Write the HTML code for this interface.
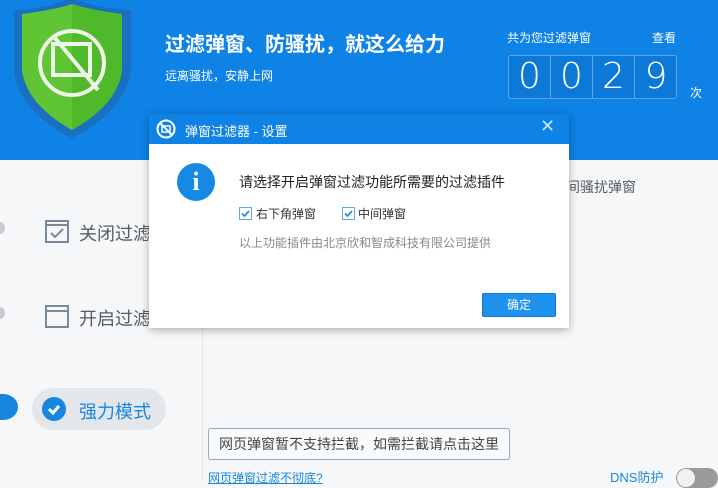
<!DOCTYPE html>
<html><head><meta charset="utf-8"><style>
*{margin:0;padding:0;box-sizing:border-box}
body{width:718px;height:480px;overflow:hidden;position:relative;background:#f5f7f8;font-family:"Liberation Sans","Noto Sans CJK SC",sans-serif}
.hdr{position:absolute;left:0;top:0;width:718px;height:160px;background:#0f82e6}
.a{position:absolute;white-space:nowrap}
.dig{position:absolute;top:56px;width:42px;height:42px;border-right:1px solid #5aa7ee;color:#fff;font-size:36px;font-weight:normal;text-align:center;line-height:42px;font-family:"DejaVu Sans","Liberation Sans",sans-serif;font-weight:200}
</style></head><body>
<div class="hdr"></div>
<svg class="a" style="left:10px;top:0" width="125" height="140" viewBox="0 0 125 140">
<path d="M4 10 Q40 8 62 -2 Q84 8 121 10 L121 70 Q116 110 62 138 Q8 110 4 70 Z" fill="#1a6fc0"/>
<path d="M12 14 Q44 10 62 4 Q80 10 112 14 L112 70 Q108 104 62 130 Q16 104 12 70 Z" fill="#5fc535"/>
<path d="M62 4 Q80 10 112 14 L112 70 Q108 104 62 130 Z" fill="#50b82b"/>
<circle cx="62" cy="63" r="32" fill="none" stroke="#eef6e6" stroke-width="4"/>
<rect x="43" y="44" width="37" height="31" fill="none" stroke="#eef6e6" stroke-width="4"/>
<line x1="45" y1="38" x2="88" y2="90" stroke="#eef6e6" stroke-width="4"/>
</svg>
<div class="a" style="left:165px;top:28px;color:#fff;font-size:20px;font-weight:bold">过滤弹窗、防骚扰，就这么给力</div>
<div class="a" style="left:165px;top:67px;color:#fff;font-size:12px">远离骚扰，安静上网</div>
<div class="a" style="left:507px;top:29px;color:#fff;font-size:12px">共为您过滤弹窗</div>
<div class="a" style="left:652px;top:29px;color:#fff;font-size:12px">查看</div>
<div class="a" style="left:508px;top:55px;width:169px;height:44px;border:1px solid #5aa7ee;border-radius:3px;background:#0c78d8"></div>
<div class="dig" style="left:509px">0</div><div class="dig" style="left:551px">0</div><div class="dig" style="left:593px">2</div><div class="dig" style="left:635px;border:none">9</div>
<div class="a" style="left:690px;top:84px;color:#fff;font-size:12px">次</div>
<div class="a" style="left:202px;top:160px;width:1px;height:320px;background:#e3e6e8"></div>
<div class="a" style="left:-5px;top:222px;width:10px;height:12px;border-radius:50%;background:#c8ccd0"></div>
<div class="a" style="left:-5px;top:307px;width:10px;height:12px;border-radius:50%;background:#c8ccd0"></div>
<svg class="a" style="left:45px;top:220px" width="24" height="24"><rect x="1" y="1" width="22" height="21" fill="none" stroke="#7b8a99" stroke-width="2"/><line x1="1" y1="5" x2="23" y2="5" stroke="#7b8a99" stroke-width="2"/><path d="M6 13 L10 17 L18 9" fill="none" stroke="#7b8a99" stroke-width="2"/></svg>
<div class="a" style="left:79px;top:220px;color:#555c63;font-size:18px">关闭过滤</div>
<svg class="a" style="left:45px;top:305px" width="24" height="24"><rect x="1" y="1" width="22" height="21" fill="none" stroke="#7b8a99" stroke-width="2"/><line x1="1" y1="6" x2="23" y2="6" stroke="#7b8a99" stroke-width="2"/></svg>
<div class="a" style="left:79px;top:305px;color:#555c63;font-size:18px">开启过滤</div>
<div class="a" style="left:-12px;top:394px;width:30px;height:26px;border-radius:0 50% 50% 0/0 50% 50% 0;background:#1786e0"></div>
<div class="a" style="left:32px;top:388px;width:134px;height:42px;border-radius:21px;background:#e3e7eb"></div>
<div class="a" style="left:42px;top:397px;width:24px;height:24px;border-radius:50%;background:#1786e0"></div>
<svg class="a" style="left:42px;top:397px" width="24" height="24"><path d="M7 12 L11 16 L17 9" fill="none" stroke="#fff" stroke-width="3"/></svg>
<div class="a" style="left:79px;top:398px;color:#1786e0;font-size:18px">强力模式</div>
<div class="a" style="left:566px;top:177px;color:#555c63;font-size:14px">间骚扰弹窗</div>
<div class="a" style="left:208px;top:428px;width:302px;height:32px;border:1px solid #9aa7b4;border-radius:3px;background:#f8fafb;color:#444;font-size:14px;line-height:30px;padding-left:10px">网页弹窗暂不支持拦截，如需拦截请点击这里</div>
<div class="a" style="left:208px;top:469px;color:#1786e0;font-size:12px;text-decoration:underline">网页弹窗过滤不彻底?</div>
<div class="a" style="left:610px;top:467px;color:#1786e0;font-size:13px">DNS防护</div>
<div class="a" style="left:676px;top:468px;width:42px;height:20px;border-radius:10px;background:#9a9a9a"></div>
<div class="a" style="left:677px;top:469px;width:18px;height:18px;border-radius:50%;background:#f1f1f1"></div>
<div class="a" style="left:149px;top:114px;width:420px;height:214px;background:#fff;box-shadow:0 2px 8px rgba(0,0,0,.3)"></div>
<div class="a" style="left:149px;top:114px;width:420px;height:30px;background:#0f82e6"></div>
<svg class="a" style="left:156px;top:119px" width="20" height="20"><circle cx="10" cy="10" r="8.5" fill="none" stroke="#fff" stroke-width="2"/><rect x="6" y="7" width="8" height="6" fill="none" stroke="#fff" stroke-width="1.5"/><line x1="4" y1="4" x2="16" y2="16" stroke="#fff" stroke-width="2"/></svg>
<div class="a" style="left:185px;top:121px;color:#fff;font-size:13px">弹窗过滤器 - 设置</div>
<div class="a" style="left:540px;top:116px;color:#cfe4f8;font-size:18px">✕</div>
<div class="a" style="left:177px;top:163px;width:38px;height:38px;border-radius:50%;background:#1789e4;color:#fff;font:bold 26px 'Liberation Serif',serif;text-align:center;line-height:38px">i</div>
<div class="a" style="left:239px;top:172px;color:#222;font-size:14px">请选择开启弹窗过滤功能所需要的过滤插件</div>
<svg class="a" style="left:239px;top:207px" width="13" height="13"><rect x="0.5" y="0.5" width="12" height="12" fill="#fff" stroke="#69a8e0"/><path d="M3 6.5 L5.5 9 L10 4" fill="none" stroke="#2a8ce0" stroke-width="1.8"/></svg>
<div class="a" style="left:256px;top:205px;color:#333;font-size:12px">右下角弹窗</div>
<svg class="a" style="left:342px;top:207px" width="13" height="13"><rect x="0.5" y="0.5" width="12" height="12" fill="#fff" stroke="#69a8e0"/><path d="M3 6.5 L5.5 9 L10 4" fill="none" stroke="#2a8ce0" stroke-width="1.8"/></svg>
<div class="a" style="left:358px;top:205px;color:#333;font-size:12px">中间弹窗</div>
<div class="a" style="left:239px;top:234px;color:#888;font-size:12px">以上功能插件由北京欣和智成科技有限公司提供</div>
<div class="a" style="left:482px;top:293px;width:74px;height:24px;border:1px solid #0f78d6;border-radius:2px;background:#1e92ec;color:#fff;font-size:12px;text-align:center;line-height:22px">确定</div>
</body></html>
